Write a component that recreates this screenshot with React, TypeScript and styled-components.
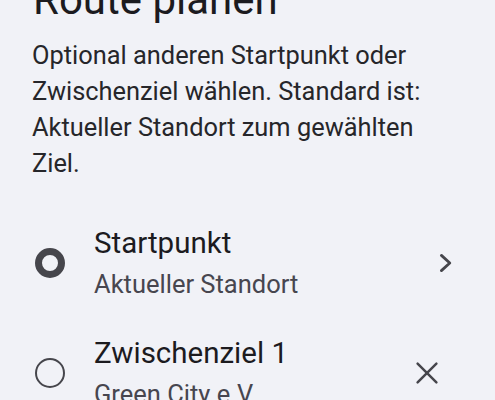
import React from "react";
import styled, { createGlobalStyle } from "styled-components";

const Global = createGlobalStyle`
  html, body { margin: 0; padding: 0; background: #f1f2f7; }
  body { font-family: Roboto, "Noto Sans", sans-serif; overflow: hidden; }
`;

const Page = styled.div`
  width: 495px;
  height: 400px;
  overflow: hidden;
  background: #f1f2f7;
  color: #1c1b1f;
`;

const Header = styled.div`
  padding: 0 40px 0 32px;
`;

const Title = styled.h1`
  margin: -26.4px 0 0 1px;
  font-size: 42px;
  line-height: 52px;
  font-weight: 400;
  color: #1c1b1f;
`;

const Intro = styled.p`
  margin: 11.7px 0 0;
  font-size: 25.4px;
  line-height: 36px;
  font-weight: 400;
  color: #26262a;
`;

const List = styled.div`
  margin-top: 26.3px;
  display: flex;
  flex-direction: column;
`;

const Row = styled.div`
  display: flex;
  align-items: center;
  height: 110px;
  padding: 0 35px 0 34px;
  box-sizing: border-box;
`;

const Lead = styled.div`
  width: 31px;
  display: flex;
  justify-content: center;
  flex-shrink: 0;
`;

const Ring = styled.div<{ $bold?: boolean }>`
  width: 30px;
  height: 30px;
  border-radius: 50%;
  box-sizing: border-box;
  border: ${(p) => (p.$bold ? "7.5px" : "2.5px")} solid #46464c;
`;

const Texts = styled.div`
  flex: 1;
  margin-left: 29px;
  display: flex;
  flex-direction: column;
  gap: 6.4px;
`;

const RowTitle = styled.div`
  font-size: 29.5px;
  line-height: 36px;
  color: #1c1b1f;
`;

const RowSub = styled.div`
  font-size: 25.5px;
  line-height: 32px;
  color: #47464f;
`;

const Trail = styled.div<{ $end?: boolean }>`
  width: 56px;
  height: 40px;
  display: flex;
  align-items: center;
  justify-content: ${(p) => (p.$end ? "flex-end" : "flex-start")};
  padding-left: ${(p) => (p.$end ? "0" : "10px")};
  padding-right: ${(p) => (p.$end ? "2px" : "0")};
  box-sizing: border-box;
  color: #46464c;
`;

const Chevron = () => (
  <svg width="24" height="24" viewBox="0 0 24 24" fill="none">
    <path d="M7.4 4.4 L15.8 12 L7.4 19.6" stroke="currentColor" strokeWidth="2.8" strokeLinecap="round" strokeLinejoin="round" />
  </svg>
);

const Close = () => (
  <svg width="26" height="26" viewBox="0 0 26 26" fill="none">
    <path d="M3.6 3.6 L22.4 22.4 M22.4 3.6 L3.6 22.4" stroke="currentColor" strokeWidth="2.5" strokeLinecap="round" />
  </svg>
);

export default function App() {
  return (
    <>
      <Global />
      <Page>
        <Header>
          <Title>Route planen</Title>
          <Intro>
            Optional anderen Startpunkt oder Zwischenziel wählen. Standard ist: Aktueller Standort zum gewählten Ziel.
          </Intro>
        </Header>
        <List>
          <Row>
            <Lead><Ring $bold /></Lead>
            <Texts>
              <RowTitle>Startpunkt</RowTitle>
              <RowSub>Aktueller Standort</RowSub>
            </Texts>
            <Trail $end><Chevron /></Trail>
          </Row>
          <Row>
            <Lead><Ring /></Lead>
            <Texts>
              <RowTitle>Zwischenziel 1</RowTitle>
              <RowSub>Green City e.V.</RowSub>
            </Texts>
            <Trail><Close /></Trail>
          </Row>
        </List>
      </Page>
    </>
  );
}
